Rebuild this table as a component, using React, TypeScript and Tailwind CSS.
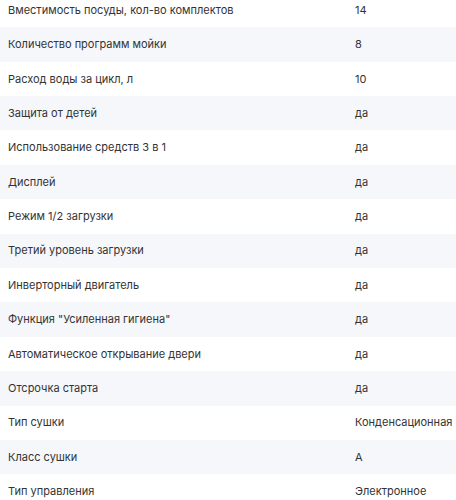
const specs: [string, string][] = [
  ["Вместимость посуды, кол-во комплектов", "14"],
  ["Количество программ мойки", "8"],
  ["Расход воды за цикл, л", "10"],
  ["Защита от детей", "да"],
  ["Использование средств 3 в 1", "да"],
  ["Дисплей", "да"],
  ["Режим 1/2 загрузки", "да"],
  ["Третий уровень загрузки", "да"],
  ["Инверторный двигатель", "да"],
  ["Функция \"Усиленная гигиена\"", "да"],
  ["Автоматическое открывание двери", "да"],
  ["Отсрочка старта", "да"],
  ["Тип сушки", "Конденсационная"],
  ["Класс сушки", "А"],
  ["Тип управления", "Электронное"],
];

const App = () => {
  return (
    <div className="h-[500px] w-[456px] overflow-hidden bg-white font-['Inter',sans-serif] text-[11px] text-[#333]">
      <div className="-mt-[7.2px]">
        {specs.map(([label, value], i) => (
          <div
            key={label}
            className={`flex h-[34.4px] items-center ${i % 2 === 1 ? "bg-[#f6f7fb]" : "bg-white"}`}
          >
            <div className="w-[355px] shrink-0 pl-2 whitespace-nowrap">{label}</div>
            <div className="whitespace-nowrap">{value}</div>
          </div>
        ))}
      </div>
    </div>
  );
};

export default App;
